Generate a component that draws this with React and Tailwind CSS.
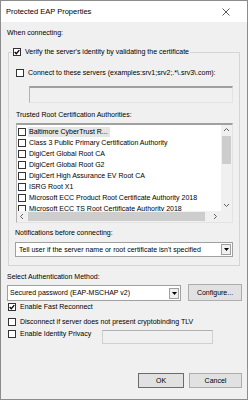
import React from "react";

const Check = ({ checked }) => (
  <span className="w-[8px] h-[8px] shrink-0 border border-[#333] bg-white flex items-center justify-center">
    {checked && (
      <svg width="6" height="6" viewBox="0 0 6 6">
        <path d="M0.7 3 L2.3 4.7 L5.3 1.1" fill="none" stroke="#000" strokeWidth="1.3" />
      </svg>
    )}
  </span>
);

const Chevron = ({ dir }) => {
  const d = {
    up: "M1 4 L3.5 1.5 L6 4",
    down: "M1 2 L3.5 4.5 L6 2",
    left: "M4 1 L1.5 3.5 L4 6",
    right: "M2 1 L4.5 3.5 L2 6",
  }[dir];
  return (
    <svg width="7" height="7" viewBox="0 0 7 7">
      <path d={d} fill="none" stroke="#606060" strokeWidth="1" />
    </svg>
  );
};

const DropArrow = () => (
  <span className="w-[10px] h-[11px] shrink-0 border border-[#a0a0a0] bg-[#f0f0f0] flex items-center justify-center">
    <svg width="5" height="3" viewBox="0 0 5 3">
      <path d="M0 0 L5 0 L2.5 3 Z" fill="#000" />
    </svg>
  </span>
);

const certs = [
  "Baltimore CyberTrust R...",
  "Class 3 Public Primary Certification Authority",
  "DigiCert Global Root CA",
  "DigiCert Global Root G2",
  "DigiCert High Assurance EV Root CA",
  "ISRG Root X1",
  "Microsoft ECC Product Root Certificate Authority 2018",
  "Microsoft ECC TS Root Certificate Authority 2018",
];

const App = () => {
  return (
    <div className="w-[248px] h-[400px] border border-[#8c8c8c] bg-[#f0f0f0] flex flex-col text-black font-['Liberation_Sans',Arial,sans-serif] text-[7px] leading-[10px] overflow-hidden">
      {/* Title bar */}
      <div className="h-[21px] shrink-0 bg-white flex items-center justify-between pl-[5px] pr-[17px]">
        <span className="text-[7.5px]">Protected EAP Properties</span>
        <svg width="8" height="8" viewBox="0 0 8 8">
          <path d="M0.5 0.5 L7.5 7.5 M7.5 0.5 L0.5 7.5" stroke="#333" strokeWidth="0.8" />
        </svg>
      </div>

      <div className="mt-[6px] ml-[6px] h-[10px]">When connecting:</div>

      {/* Group box */}
      <div className="mt-[14px] ml-[7px] w-[232px] border border-[#d5d5d5] pb-[8px] flex flex-col">
        <div className="-mt-[6px] ml-[3px] px-[1px] h-[10px] w-fit bg-[#f0f0f0] flex items-center gap-[4px]">
          <Check checked />
          <span className="whitespace-nowrap">Verify the server's identity by validating the certificate</span>
        </div>

        <div className="mt-[11px] pl-[7px] h-[10px] flex items-center gap-[4px]">
          <Check />
          <span className="whitespace-nowrap">Connect to these servers (examples:srv1;srv2;.*\.srv3\.com):</span>
        </div>

        <div className="mt-[8px] ml-[20px] w-[204px] h-[17px] bg-[#f0f0f0] border-t-2 border-t-[#a0a0a0] border-l border-l-[#b4b4b4] border-r border-r-[#e3e3e3] border-b border-b-[#e3e3e3]" />

        <div className="mt-[7px] ml-[7px] h-[10px]">Trusted Root Certification Authorities:</div>

        {/* List box */}
        <div className="mt-[3px] ml-[7px] w-[217px] h-[100px] bg-white flex flex-col border-t-2 border-t-[#a0a0a0] border-l border-l-[#b4b4b4] border-r border-r-[#e3e3e3] border-b border-b-[#e3e3e3]">
          <div className="h-[86px] flex">
            <div className="flex-1 overflow-hidden pt-[1px]">
              {certs.map((c, i) => (
                <div key={c} className="h-[11px] flex items-center pl-[1px] gap-[2px] whitespace-nowrap">
                  <Check />
                  <span className={i === 0 ? "bg-[#e5e5e5] pl-[1px] pr-[2px]" : "pl-[1px]"}>{c}</span>
                </div>
              ))}
            </div>
            <div className="w-[11px] bg-[#f0f0f0] flex flex-col items-center">
              <div className="h-[11px] flex items-center justify-center">
                <Chevron dir="up" />
              </div>
              <div className="w-[9px] h-[28px] bg-[#cdcdcd]" />
              <div className="flex-1" />
              <div className="h-[11px] flex items-center justify-center">
                <Chevron dir="down" />
              </div>
            </div>
          </div>
          <div className="h-[11px] flex">
            <div className="flex-1 bg-[#f0f0f0] flex items-center">
              <div className="w-[11px] flex items-center justify-center">
                <Chevron dir="left" />
              </div>
              <div className="w-[177px] h-[9px] bg-[#cdcdcd]" />
              <div className="flex-1" />
              <div className="w-[11px] flex items-center justify-center">
                <Chevron dir="right" />
              </div>
            </div>
            <div className="w-[11px] bg-[#f0f0f0]" />
          </div>
        </div>

        <div className="mt-[5px] ml-[6px] h-[10px]">Notifications before connecting:</div>

        <div className="mt-[4px] ml-[6px] w-[218px] h-[15px] bg-white border border-[#a0a0a0] flex items-center justify-between pl-[3px] pr-[1px]">
          <span className="whitespace-nowrap">Tell user if the server name or root certificate isn't specified</span>
          <DropArrow />
        </div>
      </div>

      <div className="mt-[6px] ml-[6px] h-[10px]">Select Authentication Method:</div>

      <div className="mt-[3px] ml-[6px] flex items-start">
        <div className="w-[174px] h-[16px] bg-white border border-[#a0a0a0] flex items-center justify-between pl-[2px] pr-[1px]">
          <span className="whitespace-nowrap">Secured password (EAP-MSCHAP v2)</span>
          <DropArrow />
        </div>
        <div className="ml-[7px] -mt-[1px] w-[54px] h-[17px] bg-[#e1e1e1] border border-[#adadad] flex items-center justify-center">
          Configure...
        </div>
      </div>

      <div className="mt-[1px] ml-[7px] h-[10px] flex items-center gap-[4px]">
        <Check checked />
        <span>Enable Fast Reconnect</span>
      </div>

      <div className="mt-[5px] ml-[7px] h-[10px] flex items-center gap-[4px]">
        <Check />
        <span className="whitespace-nowrap">Disconnect if server does not present cryptobinding TLV</span>
      </div>

      <div className="mt-[2px] ml-[7px] flex items-start">
        <div className="w-[94px] h-[10px] flex items-center gap-[4px]">
          <Check />
          <span>Enable Identity Privacy</span>
        </div>
        <div className="mt-[1px] w-[111px] h-[14px] bg-[#f0f0f0] border border-[#d0d0d0] border-t-[#b0b0b0]" />
      </div>

      <div className="mt-[29px] flex justify-end gap-[5px] pr-[5px]">
        <div className="w-[46px] h-[15px] bg-[#e1e1e1] border border-[#6b6b6b] flex items-center justify-center">
          OK
        </div>
        <div className="w-[53px] h-[15px] bg-[#e1e1e1] border border-[#adadad] flex items-center justify-center">
          Cancel
        </div>
      </div>
    </div>
  );
};

export default App;
